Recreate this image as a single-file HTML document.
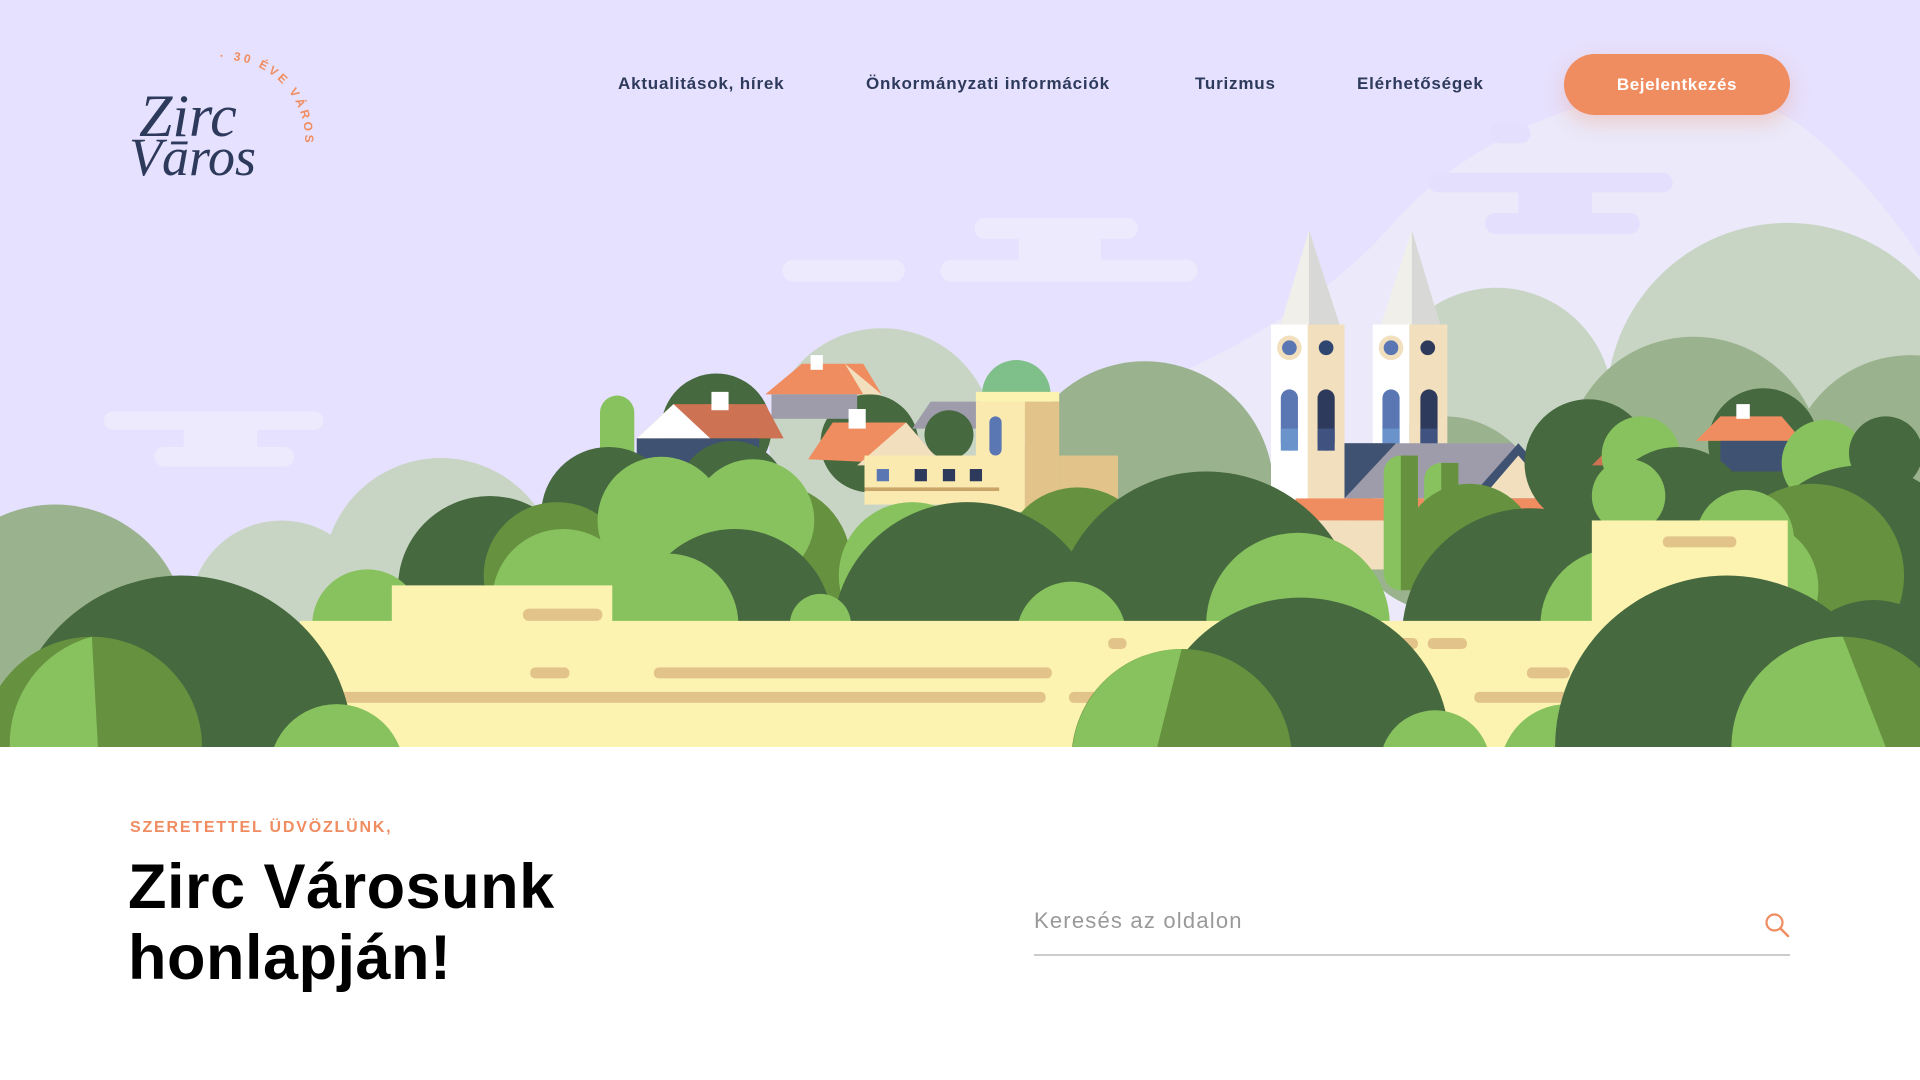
<!DOCTYPE html>
<html><head><meta charset="utf-8"><style>
*{margin:0;padding:0;box-sizing:border-box}
body{width:1920px;height:1080px;background:#fff;font-family:"Liberation Sans",sans-serif;overflow:hidden;position:relative}
#hero{position:absolute;left:0;top:0;width:1920px;height:747px}
.nav{position:absolute;top:74px;font-size:17px;font-weight:bold;color:#2e3a5c;letter-spacing:0.8px}
.btn{position:absolute;left:1564px;top:54px;width:226px;height:61px;border-radius:31px;background:#ef8c60;color:#fff;font-size:17px;font-weight:bold;text-align:center;line-height:61px;letter-spacing:0.6px;box-shadow:0 8px 20px rgba(239,140,96,.3)}
.sub{position:absolute;left:130px;top:819px;font-size:16px;font-weight:bold;color:#ef8c60;letter-spacing:1.8px}
h1{position:absolute;left:128px;top:852px;font-size:63px;line-height:71px;font-weight:900;color:#000;letter-spacing:0.5px}
.search{position:absolute;left:1034px;top:908px;font-size:22px;color:#999;letter-spacing:1.2px}
.line{position:absolute;left:1034px;top:954px;width:756px;height:2px;background:#ccc}
</style></head><body>
<svg id="hero" viewBox="0 0 1568 610" preserveAspectRatio="none">
<rect width="1568" height="610" fill="#e6e1fe"/>
<path d="M880 340 C980 300 1070 260 1140 180 C1230 80 1400 40 1480 110 C1530 150 1568 210 1568 210 L1568 610 L880 610Z" fill="#ebe9fa"/>
<g fill="#edeafd">
<rect x="796" y="178" width="133" height="17" rx="8"/><rect x="832" y="190" width="67" height="25"/><rect x="768" y="212" width="210" height="18" rx="9"/><rect x="639" y="212" width="100" height="18" rx="9"/>
<rect x="85" y="336" width="179" height="15" rx="7"/><rect x="126" y="365" width="114" height="16" rx="8"/><rect x="150" y="345" width="60" height="25"/>
</g>
<g fill="#e4dffd">
<rect x="1166" y="141" width="200" height="16" rx="8"/><rect x="1213" y="174" width="126" height="17" rx="8"/><rect x="1240" y="150" width="60" height="30"/><rect x="1217" y="101" width="33" height="16" rx="8"/>
</g>
<g fill="#c9d5c4">
<circle cx="1460" cy="330" r="148"/><circle cx="1222" cy="330" r="95"/><circle cx="720" cy="360" r="92"/><circle cx="360" cy="470" r="96"/><circle cx="230" cy="500" r="75"/>
</g>
<g fill="#9ab38e">
<circle cx="45" cy="520" r="108"/><circle cx="935" cy="400" r="105"/><circle cx="1383" cy="380" r="105"/><circle cx="1560" cy="390" r="100"/><circle cx="1180" cy="420" r="80"/>
</g>
<g>
<rect x="490" y="323" width="28" height="60" rx="14" fill="#88c25e"/>
<circle cx="585" cy="350" r="45" fill="#46693f"/>
<circle cx="710" cy="362" r="40" fill="#46693f"/>
<polygon points="625,322 655,297 705,297 720,322" fill="#ef8c60"/><polygon points="690,297 720,322 705,322" fill="#f2dfbd"/>
<rect x="662" y="290" width="10" height="12" fill="#fff"/>
<rect x="630" y="322" width="70" height="20" fill="#9e9cab"/>
<polygon points="520,358 550,330 625,330 640,358" fill="#cd7253"/><polygon points="520,358 550,330 580,358" fill="#fff"/>
<rect x="520" y="358" width="100" height="30" fill="#3f5271"/>
<rect x="581" y="320" width="14" height="15" fill="#fff"/>
<polygon points="660,375 680,345 740,345 770,380" fill="#ef8c60"/><polygon points="700,380 740,345 770,380" fill="#f2dfbd"/>
<rect x="693" y="334" width="14" height="16" fill="#fff"/>
<polygon points="745,350 760,328 800,328 800,350" fill="#9e9cab"/>
<circle cx="775" cy="355" r="20" fill="#46693f"/>
<circle cx="830" cy="322" r="28" fill="#7fbf8a"/><rect x="800" y="322" width="60" height="30" fill="#f2dfbd"/>
<rect x="797" y="320" width="68" height="8" fill="#fdf3b0"/>
<rect x="797" y="328" width="40" height="90" fill="#fbeab0"/><rect x="837" y="328" width="28" height="90" fill="#e2c48a"/>
<rect x="808" y="340" width="10" height="32" rx="5" fill="#5b77b3"/>
<rect x="865" y="372" width="48" height="40" fill="#e2c48a"/>
<rect x="706" y="372" width="110" height="40" fill="#fbeab0"/>
<rect x="716" y="383" width="10" height="10" fill="#5b77b3"/><rect x="747" y="383" width="10" height="10" fill="#2e3a5c"/><rect x="770" y="383" width="10" height="10" fill="#2e3a5c"/><rect x="792" y="383" width="10" height="10" fill="#2e3a5c"/>
<rect x="706" y="398" width="110" height="3" fill="#c9a56a"/>
</g>
<g>
<polygon points="1045,268 1069,188 1095,268" fill="#f0efe9"/><polygon points="1069,188 1095,268 1069,268" fill="#d8d8d6"/>
<polygon points="1127,268 1153,188 1177,268" fill="#f0efe9"/><polygon points="1153,188 1177,268 1153,268" fill="#d8d8d6"/>
<rect x="1038" y="265" width="30" height="145" fill="#fff"/><rect x="1068" y="265" width="30" height="145" fill="#f2dfbd"/>
<rect x="1121" y="265" width="30" height="145" fill="#fff"/><rect x="1151" y="265" width="31" height="145" fill="#f2dfbd"/>
<circle cx="1053" cy="284" r="10" fill="#f2dfbd"/><circle cx="1136" cy="284" r="10" fill="#f2dfbd"/>
<circle cx="1053" cy="284" r="6" fill="#5b77b3"/><circle cx="1083" cy="284" r="6" fill="#2e4670"/>
<circle cx="1136" cy="284" r="6" fill="#5b77b3"/><circle cx="1166" cy="284" r="6" fill="#2e3a5c"/>
<rect x="1046" y="318" width="14" height="50" rx="7" fill="#5b77b3"/><rect x="1046" y="350" width="14" height="18" fill="#6a93cc"/>
<rect x="1076" y="318" width="14" height="50" rx="7" fill="#2e3a5c"/><rect x="1076" y="350" width="14" height="18" fill="#3f5280"/>
<rect x="1129" y="318" width="14" height="50" rx="7" fill="#5b77b3"/><rect x="1129" y="350" width="14" height="18" fill="#6a93cc"/>
<rect x="1160" y="318" width="14" height="50" rx="7" fill="#2e3a5c"/><rect x="1160" y="350" width="14" height="18" fill="#3f5280"/>
<polygon points="1098,362 1235,362 1275,407 1098,407" fill="#9e9cab"/><polygon points="1098,362 1140,362 1098,407" fill="#3f5271"/>
<polygon points="1200,407 1240,362 1280,407" fill="#3f5271"/><polygon points="1210,407 1240,372 1270,407" fill="#f2dfbd"/>
<rect x="1058" y="407" width="225" height="18" fill="#ef8c60"/><rect x="1058" y="425" width="225" height="40" fill="#f2dfbd"/>
<rect x="1130" y="372" width="28" height="110" rx="14" fill="#88c25e"/><rect x="1144" y="372" width="14" height="110" fill="#66923f"/>
<rect x="1163" y="378" width="28" height="104" rx="14" fill="#88c25e"/><rect x="1177" y="378" width="14" height="104" fill="#66923f"/>
<rect x="1275" y="372" width="28" height="80" rx="14" fill="#88c25e"/><rect x="1289" y="372" width="14" height="80" fill="#66923f"/>
</g>
<g>
<circle cx="1297" cy="378" r="52" fill="#46693f"/><circle cx="1440" cy="362" r="45" fill="#46693f"/>
<polygon points="1385,360 1405,340 1455,340 1472,360" fill="#ef8c60"/><rect x="1418" y="330" width="11" height="12" fill="#fff"/>
<rect x="1405" y="360" width="55" height="25" fill="#3f5271"/>
<polygon points="1300,380 1310,370 1370,370 1380,380" fill="#cd7253"/><rect x="1337" y="361" width="12" height="14" fill="#fff"/>
<circle cx="1340" cy="372" r="32" fill="#88c25e"/><circle cx="1490" cy="378" r="35" fill="#88c25e"/><circle cx="1540" cy="370" r="30" fill="#46693f"/>
</g>
<g fill="#46693f">
<circle cx="497" cy="420" r="55"/><circle cx="400" cy="480" r="75"/><circle cx="598" cy="405" r="45"/><circle cx="1370" cy="425" r="60"/><circle cx="1520" cy="470" r="90"/>
</g>
<g fill="#66923f"><circle cx="455" cy="470" r="60"/><circle cx="630" cy="460" r="65"/><circle cx="880" cy="460" r="62"/><circle cx="1200" cy="450" r="55"/><circle cx="1480" cy="470" r="75"/></g>
<g fill="#88c25e"><circle cx="540" cy="425" r="52"/><circle cx="615" cy="425" r="50"/><circle cx="745" cy="470" r="60"/><circle cx="1425" cy="440" r="40"/><circle cx="1330" cy="405" r="30"/></g>
<g fill="#46693f">
<circle cx="600" cy="512" r="80"/><circle cx="790" cy="520" r="110"/><circle cx="985" cy="510" r="125"/><circle cx="1250" cy="520" r="105"/>
</g>
<g fill="#88c25e"><circle cx="460" cy="490" r="58"/><circle cx="545" cy="510" r="58"/><circle cx="1060" cy="510" r="75"/><circle cx="1320" cy="510" r="62"/><circle cx="875" cy="520" r="45"/><circle cx="670" cy="510" r="25"/><circle cx="300" cy="510" r="45"/><circle cx="1430" cy="480" r="55"/></g>
<path d="M320 478 L500 478 L500 507 L1310 507 L1310 610 L245 610 L245 507 L320 507Z" fill="#fdf3b0"/>
<rect x="1300" y="425" width="160" height="90" fill="#fdf3b0"/>
<g fill="#e2c48a">
<rect x="427" y="497" width="65" height="10" rx="5"/><rect x="433" y="545" width="32" height="9" rx="4"/><rect x="534" y="545" width="325" height="9" rx="4"/>
<rect x="270" y="565" width="584" height="9" rx="4"/><rect x="873" y="565" width="60" height="9" rx="4"/><rect x="905" y="521" width="15" height="9" rx="4"/>
<rect x="1166" y="521" width="32" height="9" rx="4"/><rect x="1140" y="521" width="18" height="9" rx="4"/><rect x="1247" y="545" width="35" height="9" rx="4"/><rect x="1204" y="565" width="80" height="9" rx="4"/><rect x="1358" y="438" width="60" height="9" rx="4"/>
</g>
<g>
<circle cx="148" cy="610" r="140" fill="#46693f"/><circle cx="75" cy="610" r="90" fill="#66923f"/><path d="M75 520 A90 90 0 0 0 8 610 L80 610Z" fill="#88c25e"/>
<circle cx="275" cy="630" r="55" fill="#88c25e"/><circle cx="1062" cy="610" r="122" fill="#46693f"/><circle cx="965" cy="620" r="90" fill="#66923f"/><path d="M965 530 A90 90 0 0 0 876 610 L945 610Z" fill="#88c25e"/>
<circle cx="1172" cy="625" r="45" fill="#88c25e"/><circle cx="1280" cy="630" r="55" fill="#88c25e"/>
<circle cx="1410" cy="610" r="140" fill="#46693f"/><circle cx="1530" cy="560" r="70" fill="#46693f"/><circle cx="1505" cy="610" r="90" fill="#66923f"/><path d="M1505 520 A90 90 0 0 0 1414 610 L1540 610 Z" fill="#88c25e"/>
</g>
</svg>
<svg style="position:absolute;left:125px;top:48px" width="200" height="135" viewBox="0 0 200 135">
<text x="14" y="88" font-family="Liberation Serif,serif" font-style="italic" font-size="60" fill="#2e3a5c">Zirc</text>
<text x="4" y="127" font-family="Liberation Serif,serif" font-style="italic" font-size="54" fill="#2e3a5c">Vāros</text>
<path id="arc" d="M95 12 A80 80 0 0 1 180 95" fill="none"/>
<text font-size="12" font-weight="bold" fill="#ef8c60" letter-spacing="3"><textPath href="#arc">· 30 ÉVE VÁROS ·</textPath></text>
</svg>
<div class="nav" style="left:618px">Aktualitások, hírek</div>
<div class="nav" style="left:866px">Önkormányzati információk</div>
<div class="nav" style="left:1195px">Turizmus</div>
<div class="nav" style="left:1357px">Elérhetőségek</div>
<div class="btn">Bejelentkezés</div>
<div class="sub">SZERETETTEL ÜDVÖZLÜNK,</div>
<h1>Zirc Városunk<br>honlapján!</h1>
<div class="search">Keresés az oldalon</div>
<svg style="position:absolute;left:1764px;top:912px" width="26" height="26" viewBox="0 0 26 26"><circle cx="10.5" cy="10.5" r="8" fill="none" stroke="#ef8c60" stroke-width="2.2"/><line x1="16.5" y1="16.5" x2="24" y2="24" stroke="#ef8c60" stroke-width="2.4" stroke-linecap="round"/></svg>
<div class="line"></div>
</body></html>
